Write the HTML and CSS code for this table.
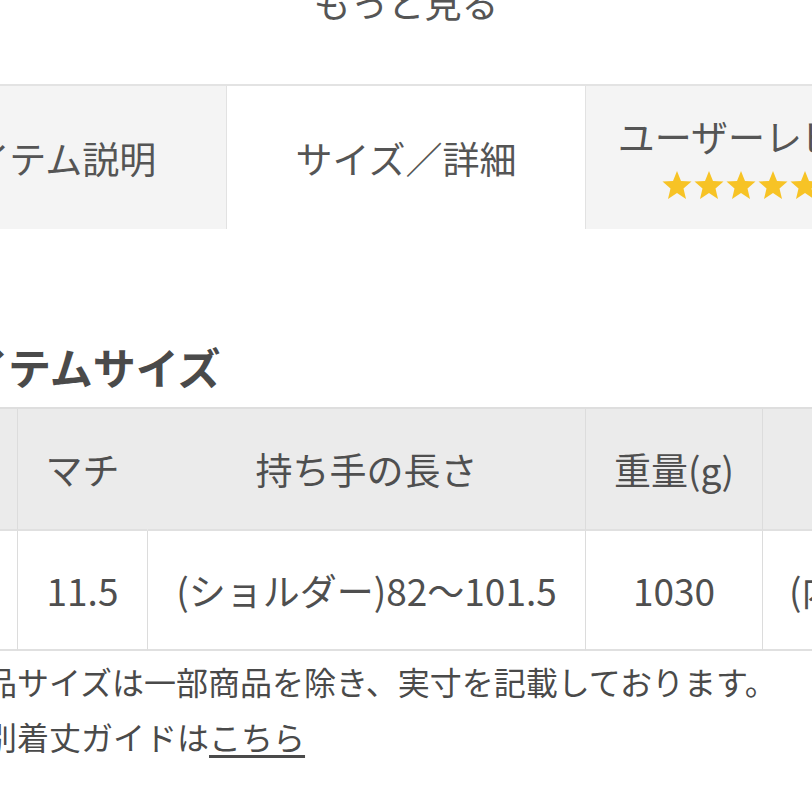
FILE: index.html
```html
<!DOCTYPE html>
<html lang="ja">
<head>
<meta charset="utf-8">
<link rel="stylesheet" href="styles.css">
</head>
<body>
<div class="page">
  <div class="more">もっと見る</div>
  <div class="tabs">
    <div class="tab">アイテム説明</div>
    <div class="tab active">サイズ／詳細</div>
    <div class="tab review">
      <div class="review-title">ユーザーレビュー</div>
      <div class="stars">
        <svg class="star-row" width="160" height="30" viewBox="0 0 160 30">
          <g fill="#f7c325">
            <polygon points="15,1 19,11 29.5,11.5 21.5,18.5 24,29 15,23 6,29 8.5,18.5 0.5,11.5 11,11"/>
            <polygon transform="translate(32 0)" points="15,1 19,11 29.5,11.5 21.5,18.5 24,29 15,23 6,29 8.5,18.5 0.5,11.5 11,11"/>
            <polygon transform="translate(64 0)" points="15,1 19,11 29.5,11.5 21.5,18.5 24,29 15,23 6,29 8.5,18.5 0.5,11.5 11,11"/>
            <polygon transform="translate(96 0)" points="15,1 19,11 29.5,11.5 21.5,18.5 24,29 15,23 6,29 8.5,18.5 0.5,11.5 11,11"/>
            <polygon transform="translate(128 0)" points="15,1 19,11 29.5,11.5 21.5,18.5 24,29 15,23 6,29 8.5,18.5 0.5,11.5 11,11"/>
          </g>
        </svg>
        <span class="count">(2)</span>
      </div>
    </div>
  </div>

  <div class="content">
    <h2 class="heading">アイテムサイズ</h2>
    <table class="size-table">
      <colgroup>
        <col class="c1"><col class="c2"><col class="c3"><col class="c4"><col class="c5">
      </colgroup>
      <thead>
        <tr>
          <th>横</th>
          <th class="no-right">マチ</th>
          <th>持ち手の長さ</th>
          <th>重量(g)</th>
          <th class="wide">備考</th>
        </tr>
      </thead>
      <tbody>
        <tr>
          <td>45</td>
          <td>11.5</td>
          <td>(ショルダー)82〜101.5</td>
          <td>1030</td>
          <td class="wide left">(内ポケット)あり</td>
        </tr>
      </tbody>
    </table>
    <div class="notes">
      <p class="note">※商品サイズは一部商品を除き、実寸を記載しております。</p>
      <p class="note">※個別着丈ガイドは<a href="#" class="link">こちら</a></p>
    </div>
  </div>
</div>
</body>
</html>
```

FILE: styles.css
```css
html, body {
  margin: 0;
  padding: 0;
  background: #ffffff;
}
body {
  width: 812px;
  height: 812px;
  overflow: hidden;
  font-family: "Noto Sans CJK JP", "Noto Sans", sans-serif;
  color: #4f4f4f;
}
.page {
  width: 812px;
}
.more {
  margin-top: -23px;
  height: 50px;
  line-height: 50px;
  text-align: center;
  font-size: 37px;
  color: #555;
}
.tabs {
  margin-top: 57px;
  margin-left: -132px;
  width: 1077px;
  display: flex;
  border-top: 2px solid #e3e3e3;
  height: 143px;
}
.tab {
  flex: 0 0 359px;
  box-sizing: border-box;
  background: #f4f4f4;
  display: flex;
  align-items: center;
  justify-content: center;
  font-size: 37px;
  color: #555;
  border-right: 1px solid #e2e2e2;
}
.tab.active {
  background: #ffffff;
}
.tab.review {
  flex-direction: column;
  border-right: none;
}
.review-title {
  line-height: 46px;
  margin-top: -1px;
}
.stars {
  display: flex;
  align-items: center;
  gap: 8px;
  margin-top: 9px;
  margin-left: -4px;
  height: 34px;
}
.star-row {
  display: block;
}
.count {
  font-size: 28px;
  color: #555;
}
.content {
  margin-left: -75px;
  width: 1200px;
}
.heading {
  margin: 108px 0 0 0;
  height: 58px;
  line-height: 58px;
  font-size: 43px;
  font-weight: 700;
  color: #4a4a4a;
}
.size-table {
  margin-top: 12px;
  border-collapse: separate;
  border-spacing: 0;
  table-layout: fixed;
  width: 1200px;
  border-top: 2px solid #dedede;
}
.c1 { width: 93px; }
.c2 { width: 130px; }
.c3 { width: 438px; }
.c4 { width: 177px; }
.c5 { width: 362px; }
.size-table th,
.size-table td {
  text-align: center;
  font-size: 37px;
  font-weight: 400;
  color: #4f4f4f;
  border-right: 1px solid #dcdcdc;
  border-bottom: 2px solid #e0e0e0;
  padding: 0;
}
.size-table th {
  background: #ebebeb;
  height: 120px;
}
.size-table th.no-right {
  border-right-color: #ebebeb;
}
.size-table td {
  background: #ffffff;
  height: 118px;
}
.size-table .left {
  text-align: left;
  padding-left: 26px;
}
.notes {
  margin-left: -4px;
  padding-top: 3px;
}
.note {
  margin: 0;
  font-size: 32px;
  line-height: 55px;
  color: #4a4a4a;
  white-space: nowrap;
}
.link {
  color: #4a4a4a;
  text-decoration: underline;
  text-underline-offset: 5px;
}
```
